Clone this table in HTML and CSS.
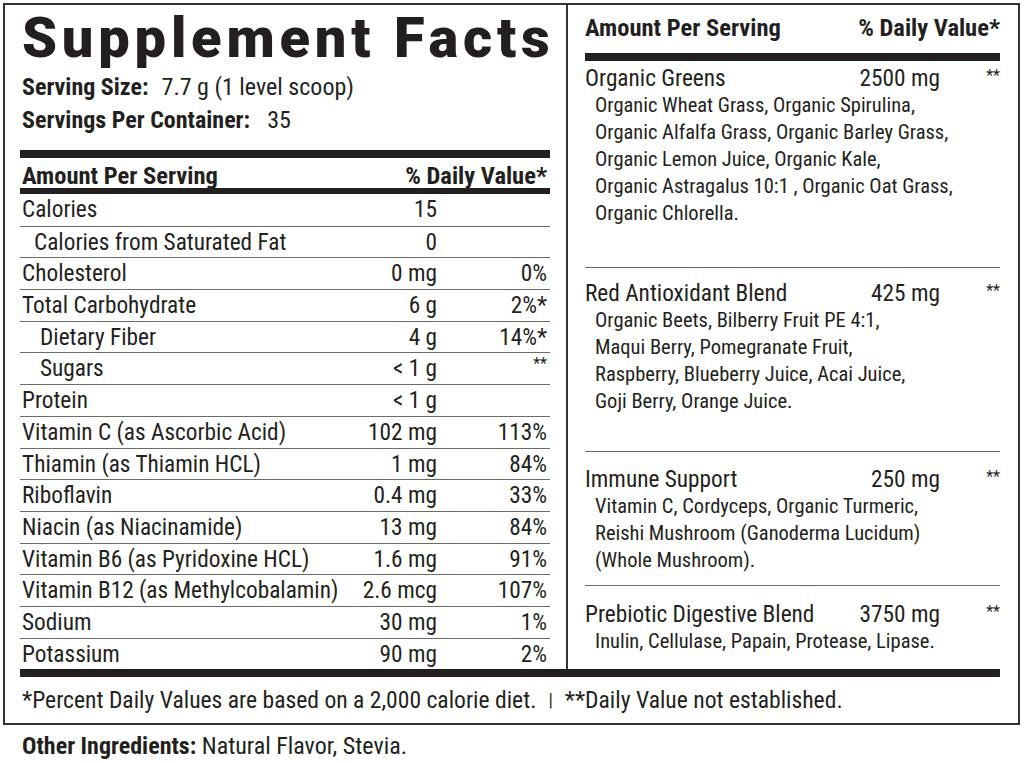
FILE: index.html
```html
<!DOCTYPE html>
<html>
<head>
<meta charset="utf-8">
<link rel="stylesheet" href="styles.css">
</head>
<body>
<div class="label">
  <div class="cols">
    <section class="left">
      <h1 class="title">Supplement Facts</h1>
      <p class="serving serving-first"><b>Serving Size:</b><span class="sv-val">7.7 g (1 level scoop)</span></p>
      <p class="serving"><b>Servings Per Container:</b><span class="sv-val sv-wide">35</span></p>
      <div class="bar bar-thick"></div>
      <div class="head"><span>Amount Per Serving</span><span>% Daily Value*</span></div>
      <div class="bar bar-medium"></div>
      <div class="facts">
        <div class="row"><span class="name">Calories</span><span class="amt">15</span><span class="dv"></span></div>
        <div class="row"><span class="name ind1">Calories from Saturated Fat</span><span class="amt">0</span><span class="dv"></span></div>
        <div class="row"><span class="name">Cholesterol</span><span class="amt">0 mg</span><span class="dv">0%</span></div>
        <div class="row"><span class="name">Total Carbohydrate</span><span class="amt">6 g</span><span class="dv">2%*</span></div>
        <div class="row"><span class="name ind2">Dietary Fiber</span><span class="amt">4 g</span><span class="dv">14%*</span></div>
        <div class="row"><span class="name ind2">Sugars</span><span class="amt">&lt; 1 g</span><span class="dv"><span class="stars">**</span></span></div>
        <div class="row"><span class="name">Protein</span><span class="amt">&lt; 1 g</span><span class="dv"></span></div>
        <div class="row"><span class="name">Vitamin C (as Ascorbic Acid)</span><span class="amt">102 mg</span><span class="dv">113%</span></div>
        <div class="row"><span class="name">Thiamin (as Thiamin HCL)</span><span class="amt">1 mg</span><span class="dv">84%</span></div>
        <div class="row"><span class="name">Riboflavin</span><span class="amt">0.4 mg</span><span class="dv">33%</span></div>
        <div class="row"><span class="name">Niacin (as Niacinamide)</span><span class="amt">13 mg</span><span class="dv">84%</span></div>
        <div class="row"><span class="name">Vitamin B6 (as Pyridoxine HCL)</span><span class="amt">1.6 mg</span><span class="dv">91%</span></div>
        <div class="row"><span class="name">Vitamin B12 (as Methylcobalamin)</span><span class="amt">2.6 mcg</span><span class="dv">107%</span></div>
        <div class="row"><span class="name">Sodium</span><span class="amt">30 mg</span><span class="dv">1%</span></div>
        <div class="row"><span class="name">Potassium</span><span class="amt">90 mg</span><span class="dv">2%</span></div>
      </div>
    </section>
    <section class="right">
      <div class="head head-right"><span>Amount Per Serving</span><span>% Daily Value*</span></div>
      <div class="bar bar-thick bar-right"></div>
      <div class="blend blend-1">
        <div class="blend-row"><span>Organic Greens</span><span class="b-amt">2500 mg</span><span class="b-dv"><span class="stars">**</span></span></div>
        <p class="blend-items">Organic Wheat Grass, Organic Spirulina,<br>Organic Alfalfa Grass, Organic Barley Grass,<br>Organic Lemon Juice, Organic Kale,<br>Organic Astragalus 10:1 , Organic Oat Grass,<br>Organic Chlorella.</p>
      </div>
      <div class="blend blend-2">
        <div class="blend-row"><span>Red Antioxidant Blend</span><span class="b-amt">425 mg</span><span class="b-dv"><span class="stars">**</span></span></div>
        <p class="blend-items">Organic Beets, Bilberry Fruit PE 4:1,<br>Maqui Berry, Pomegranate Fruit,<br>Raspberry, Blueberry Juice, Acai Juice,<br>Goji Berry, Orange Juice.</p>
      </div>
      <div class="blend blend-3">
        <div class="blend-row"><span>Immune Support</span><span class="b-amt">250 mg</span><span class="b-dv"><span class="stars">**</span></span></div>
        <p class="blend-items">Vitamin C, Cordyceps, Organic Turmeric,<br>Reishi Mushroom (Ganoderma Lucidum)<br>(Whole Mushroom).</p>
      </div>
      <div class="blend blend-4">
        <div class="blend-row"><span>Prebiotic Digestive Blend</span><span class="b-amt">3750 mg</span><span class="b-dv"><span class="stars">**</span></span></div>
        <p class="blend-items">Inulin, Cellulase, Papain, Protease, Lipase.</p>
      </div>
    </section>
  </div>
  <div class="bar bar-thick bar-footer"></div>
  <p class="footnote">*Percent Daily Values are based on a 2,000 calorie diet.<span class="sep">|</span>**Daily Value not established.</p>
</div>
<p class="other"><b>Other Ingredients:</b> Natural Flavor, Stevia.</p>
</body>
</html>
```

FILE: styles.css
```css
html, body {
  margin: 0;
  padding: 0;
  background: #ffffff;
}
body {
  font-family: Roboto, "Liberation Sans", sans-serif;
  font-stretch: 75%;
  color: #231f20;
  font-size: 23.3px;
}
p { margin: 0; }
b { font-weight: 700; }
.label {
  margin: 3px 0 0 3px;
  width: 1013px;
  border: 2px solid #333;
}
.cols {
  display: flex;
}
.left {
  width: 530px;
  padding: 0 16px 0 15px;
}
.right {
  flex: 1;
  border-left: 2px solid #333;
  padding: 0 18px 0 17px;
}
.title {
  margin: 3px 0 0 0;
  font-family: Roboto, "Liberation Sans", sans-serif;
  font-stretch: 100%;
  font-weight: 900;
  font-size: 56px;
  line-height: 60px;
  letter-spacing: 4.8px;
  padding-left: 2px;
  white-space: nowrap;
}
.serving {
  font-size: 24px;
  line-height: 33px;
  padding-left: 2px;
}
.serving-first { margin-top: 3px; }
.sv-val { margin-left: 13px; }
.sv-wide { margin-left: 17px; }
.bar { background: #231f20; }
.bar-thick { height: 8px; margin-top: 13px; }
.bar-medium { height: 6px; }
.head {
  display: flex;
  justify-content: space-between;
  font-weight: 700;
  font-size: 24.5px;
  line-height: 25px;
  padding: 5px 3px 0 2px;
}
.facts {
  display: flex;
  flex-direction: column;
}
.row {
  display: grid;
  grid-template-columns: 1fr 100px 110px;
  height: 31.7px;
  line-height: 30px;
  box-sizing: border-box;
  border-top: 1px solid #6b6b6b;
}
.row:first-child { border-top: none; }
.name { padding-left: 2px; white-space: nowrap; }
.ind1 { padding-left: 14px; }
.ind2 { padding-left: 20px; }
.amt { text-align: right; padding-right: 3px; }
.dv { text-align: right; padding-right: 3px; }
.stars {
  font-size: 16px;
  vertical-align: top;
  line-height: 22px;
}

.head-right { padding: 0; margin-top: 8px; line-height: 30px; }
.bar-right { margin-top: 10px; }
.blend-row {
  display: grid;
  grid-template-columns: 1fr 110px 60px;
  line-height: 27px;
}
.b-amt { text-align: right; }
.b-dv { text-align: right; }
.blend-items {
  font-size: 20.5px;
  line-height: 27px;
  padding-left: 10px;
}
.blend { border-bottom: 1px solid #6b6b6b; }
.blend-1 { padding: 4px 0 40px; }
.blend-2 { padding: 12px 0 36px; }
.blend-3 { padding: 14px 0 11px; }
.blend-4 { padding: 15px 0 10px; border-bottom: none; }
.bar-footer { margin: 0 18px 0 15px; }
.footnote {
  font-size: 23.6px;
  padding: 5px 0 0 17px;
  line-height: 36px;
  height: 46px;
  box-sizing: border-box;
  white-space: nowrap;
}
.sep {
  display: inline-block;
  padding: 0 12px 0 12px;
  font-size: 18px;
  vertical-align: top;
}
.other {
  font-size: 24px;
  margin: 8px 0 0 22px;
  line-height: 26px;
}
```
